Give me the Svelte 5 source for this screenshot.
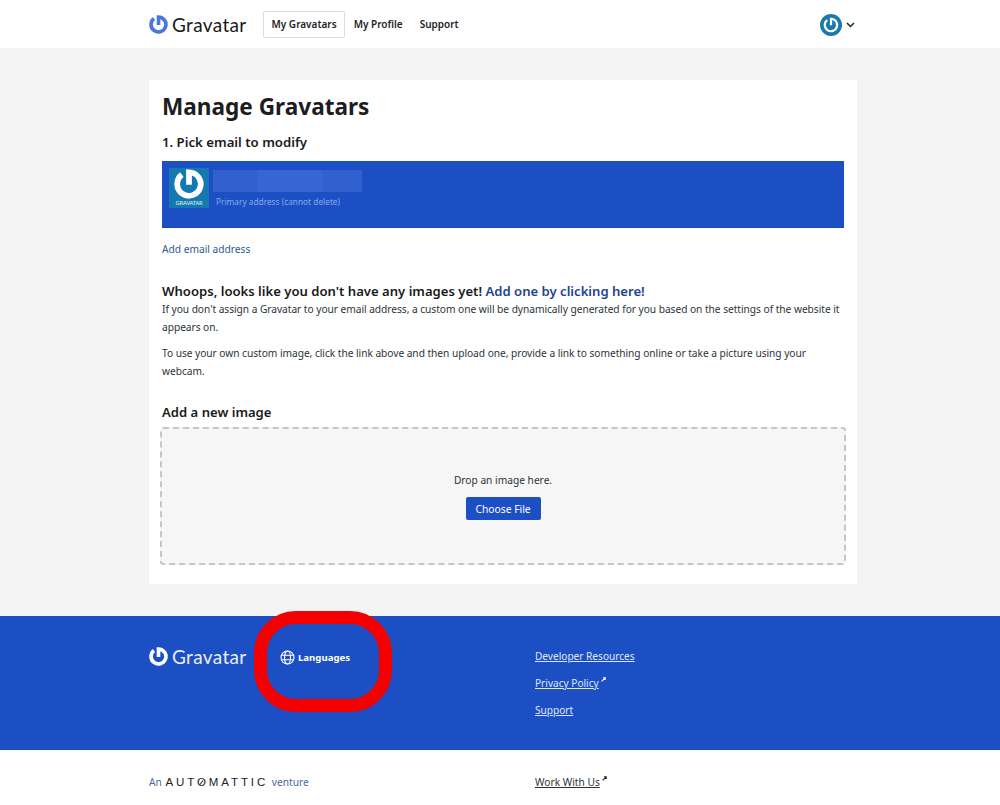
<script lang="ts">
	const footerLinks = [
		{ label: 'Developer Resources', external: false },
		{ label: 'Privacy Policy', external: true },
		{ label: 'Support', external: false }
	];
	const blurCells = [44, 66, 39];
	const logoPath = 'M12 12.5V2.6A9.4 9.4 0 1 1 6.3 4.5';
</script>

{#snippet powerIcon(size: number, color: string)}
	<svg width={size} height={size} viewBox="0 0 24 24" fill="none" aria-hidden="true">
		<path d={logoPath} stroke={color} stroke-width="4.6" />
	</svg>
{/snippet}

{#snippet arrow(color: string)}
	<svg class="arrow" width="5" height="5" viewBox="0 0 5 5" aria-hidden="true">
		<path d="M0.6 4.4 L3.8 1.2 M2 0.8 H4.2 V3" stroke={color} stroke-width="1.1" fill="none" />
	</svg>
{/snippet}

<div class="page">
	<header class="topbar">
		<div class="inner">
			<div class="brand">
				{@render powerIcon(19, '#4a78d6')}
				<span class="wordmark">Gravatar</span>
			</div>
			<nav class="nav">
				<a class="active" href="#top">My Gravatars</a>
				<a href="#top">My Profile</a>
				<a href="#top">Support</a>
			</nav>
			<div class="account">
				<svg width="22" height="22" viewBox="0 0 24 24" aria-hidden="true">
					<circle cx="12" cy="12" r="12" fill="#1a78ad" />
					<g transform="translate(3.36 3.36) scale(0.72)">
						<path d={logoPath} stroke="#fff" stroke-width="3.4" fill="none" />
					</g>
				</svg>
				<svg width="9" height="6" viewBox="0 0 9 6" aria-hidden="true">
					<path d="M1 1 L4.5 4.5 L8 1" stroke="#222" stroke-width="1.5" fill="none" />
				</svg>
			</div>
		</div>
	</header>

	<main class="main">
		<section class="card">
			<h1>Manage Gravatars</h1>
			<h2 class="step">1. Pick email to modify</h2>

			<div class="email-row">
				<div class="thumb">
					<svg width="30" height="30" viewBox="0 0 24 24" fill="none" aria-hidden="true">
						<path d={logoPath} stroke="#fff" stroke-width="4.6" />
					</svg>
					<span>GRAVATAR</span>
				</div>
				<div class="email-text">
					<div class="blur">
						{#each blurCells as w, i}
							<span class="cell" class:alt={i % 2 === 1} style="width: {w}px"></span>
						{/each}
					</div>
					<p>Primary address (cannot delete)</p>
				</div>
			</div>

			<a class="add-email" href="#top">Add email address</a>

			<h3 class="whoops">
				Whoops, looks like you don't have any images yet! <a href="#top">Add one by clicking here!</a>
			</h3>
			<p class="copy">
				If you don't assign a Gravatar to your email address, a custom one will be dynamically generated for you based on the settings of the website it appears on.
			</p>
			<p class="copy second">
				To use your own custom image, click the link above and then upload one, provide a link to something online or take a picture using your webcam.
			</p>

			<h3 class="add-new">Add a new image</h3>
			<div class="dropzone">
				<p>Drop an image here.</p>
				<button type="button">Choose File</button>
			</div>
		</section>
	</main>

	<footer class="footer">
		<div class="inner footer-inner">
			<div class="footer-left">
				<div class="brand">
					{@render powerIcon(19, '#fff')}
					<span class="wordmark">Gravatar</span>
				</div>
				<a class="languages" href="#top">
					<svg width="15" height="15" viewBox="0 0 16 16" fill="none" stroke="#fff" stroke-width="1.2" aria-hidden="true">
						<circle cx="8" cy="8" r="6.9" />
						<ellipse cx="8" cy="8" rx="3.2" ry="6.9" />
						<path d="M1.4 5.6h13.2M1.4 10.4h13.2" />
					</svg>
					Languages
				</a>
			</div>
			<ul class="footer-links">
				{#each footerLinks as link}
					<li>
						<a href="#top">{link.label}</a>
						{#if link.external}{@render arrow('#fff')}{/if}
					</li>
				{/each}
			</ul>
		</div>
	</footer>

	<div class="bottom">
		<div class="inner bottom-inner">
			<div class="venture">
				An <span class="automattic">AUT<span class="o">O</span>MATTIC</span> venture
			</div>
			<div class="work">
				<a href="#top">Work With Us</a>
				{@render arrow('#222')}
			</div>
		</div>
	</div>

	<!-- annotation drawn on top of the screenshot -->
	<div class="highlight"></div>
</div>

<style>
	:global(body) {
		margin: 0;
		background: #fff;
	}

	.page {
		position: relative;
		height: 805px;
		overflow: hidden;
		display: flex;
		flex-direction: column;
		font-family: 'Noto Sans', 'Open Sans', sans-serif;
		color: #1d2327;
		background: #f4f4f5;
	}

	/* the reference column sits 3px right of centre */
	.inner {
		width: 708px;
		margin-left: 149px;
		display: flex;
	}

	a {
		text-decoration: none;
	}

	.topbar {
		height: 48px;
		background: #fff;
		display: flex;
		flex-shrink: 0;
	}

	.topbar .inner {
		align-items: center;
		height: 48px;
	}

	.brand {
		display: flex;
		align-items: center;
		gap: 4px;
		width: 114px;
	}

	.wordmark {
		font-family: 'Lato', 'Noto Sans', sans-serif;
		font-size: 19px;
		letter-spacing: 0.35px;
		color: #1a1a1a;
	}

	.nav {
		display: flex;
		align-items: center;
	}

	.nav a {
		color: #1d2327;
		font-size: 10px;
		font-weight: 600;
		padding: 0 7.5px;
		height: 25px;
		line-height: 25px;
		border: 1px solid transparent;
		border-radius: 2px;
	}

	.nav a.active {
		border-color: #dcdcde;
	}

	.account {
		margin-left: auto;
		margin-right: 3px;
		display: flex;
		align-items: center;
		gap: 4px;
		padding-top: 1px;
		transform: translateX(1px);
	}

	.main {
		height: 568px;
		padding-top: 32px;
		box-sizing: border-box;
		flex-shrink: 0;
	}

	.card {
		width: 708px;
		height: 504px;
		box-sizing: border-box;
		margin-left: 149px;
		padding: 12px 13px 0;
		background: #fff;
	}

	h1 {
		margin: 0;
		font-size: 22.6px;
		line-height: 30px;
		font-weight: 700;
		color: #1d1d1f;
	}

	.step {
		margin: 11px 0 0;
		font-size: 13.2px;
		line-height: 19px;
		font-weight: 600;
		color: #1a1a1a;
	}

	.email-row {
		margin-top: 9px;
		height: 67px;
		background: #1d4fc4;
		display: flex;
		align-items: flex-start;
		padding: 7px 0 0 7px;
		box-sizing: border-box;
		border-bottom: 1px solid #1a47ae;
	}

	.thumb {
		width: 40px;
		height: 40px;
		background: #1479b0;
		display: flex;
		flex-direction: column;
		align-items: center;
		padding-top: 1px;
		box-sizing: border-box;
	}

	.thumb svg {
		flex-shrink: 0;
	}

	.thumb span {
		font-size: 5.8px;
		line-height: 8px;
		color: #e6f1f7;
		letter-spacing: -0.1px;
	}

	.email-text {
		margin-left: 4px;
	}

	.blur {
		display: flex;
		height: 22px;
		margin-top: 2px;
	}

	.cell {
		display: block;
		height: 22px;
		background: #3161cf;
	}

	.cell.alt {
		background: #3566d3;
	}

	.email-text p {
		margin: 3px 0 0 3px;
		font-size: 8.3px;
		line-height: 13px;
		color: #86a9ea;
	}

	.add-email {
		display: block;
		margin-top: 14px;
		font-size: 10.2px;
		line-height: 15px;
		color: #2d5a94;
	}

	.whoops {
		margin: 25px 0 0;
		font-size: 13.1px;
		line-height: 19px;
		font-weight: 600;
		color: #1a1a1a;
	}

	.whoops a {
		color: #1d4390;
	}

	.copy {
		margin: 0;
		font-size: 10.2px;
		letter-spacing: -0.04px;
		line-height: 17.5px;
		color: #2c3338;
	}

	.copy.second {
		margin-top: 9px;
	}

	.add-new {
		margin: 23px 0 0;
		font-size: 13.1px;
		line-height: 18px;
		font-weight: 600;
		color: #1a1a1a;
	}

	.dropzone {
		margin: 6px -2px 0;
		height: 138px;
		box-sizing: border-box;
		background: #f6f6f7;
		border: 2px dashed #c6c6c9;
		border-radius: 3px;
		display: flex;
		flex-direction: column;
		align-items: center;
		padding-top: 44px;
	}

	.dropzone p {
		margin: 0;
		font-size: 10.2px;
		line-height: 15px;
		color: #2c3338;
	}

	.dropzone button {
		margin-top: 9px;
		width: 75px;
		height: 23px;
		padding: 0;
		border: 0;
		border-radius: 2px;
		background: #1d4fc4;
		color: #fff;
		font-family: inherit;
		font-size: 10.3px;
	}

	.footer {
		height: 134px;
		background: #1d4fc4;
		flex-shrink: 0;
	}

	.footer-inner {
		padding-top: 31px;
		align-items: flex-start;
	}

	.footer-left {
		width: 386px;
		display: flex;
		align-items: flex-start;
	}

	.footer .wordmark {
		color: #e8eefb;
	}

	.footer .brand {
		width: 131px;
		height: 20px;
		margin-top: -1px;
	}

	.languages {
		display: flex;
		align-items: center;
		height: 20px;
		gap: 3px;
		color: #fff;
		font-size: 9.6px;
		font-weight: 700;
	}

	.footer-links {
		list-style: none;
		margin: 2px 0 0;
		padding: 0;
		display: flex;
		flex-direction: column;
		gap: 12px;
	}

	.footer-links li {
		line-height: 15px;
		font-size: 10.1px;
		white-space: nowrap;
	}

	.footer-links a {
		color: #dfe8fa;
		text-decoration: underline;
	}

	.arrow {
		vertical-align: 5px;
	}

	.bottom {
		flex: 1;
		background: #fff;
	}

	.bottom-inner {
		padding-top: 25px;
	}

	.venture {
		width: 386px;
		font-size: 10.2px;
		line-height: 15px;
		color: #4a6a9c;
		white-space: nowrap;
	}

	.automattic {
		font-family: 'Liberation Sans', sans-serif;
		color: #222;
		letter-spacing: 2.9px;
		font-size: 11.5px;
		margin: 0 1px;
	}

	.o {
		position: relative;
	}

	.o::after {
		content: '';
		position: absolute;
		left: 4px;
		top: 4px;
		width: 1px;
		height: 5px;
		background: #222;
		transform: rotate(35deg);
	}

	.work {
		font-size: 10.2px;
		line-height: 15px;
	}

	.work a {
		color: #2c3338;
		text-decoration: underline;
	}

	.highlight {
		position: absolute;
		left: 254px;
		top: 611px;
		width: 138px;
		height: 101px;
		box-sizing: border-box;
		border: 13px solid #f50000;
		border-radius: 42px;
	}
</style>
